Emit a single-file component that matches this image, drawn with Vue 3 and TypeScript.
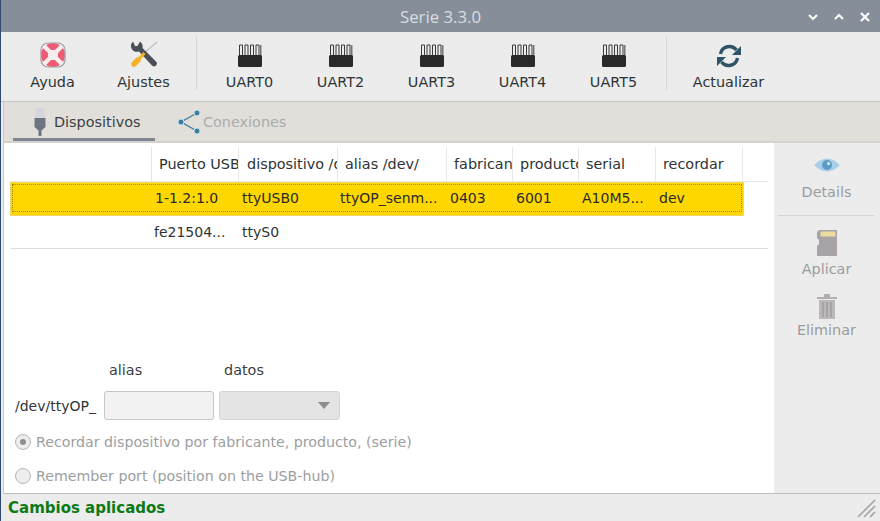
<script setup lang="ts">
const tools: string[] = ['UART0', 'UART2', 'UART3', 'UART4', 'UART5']
const cols: { label: string; w: number; pad: number }[] = [
  { label: 'Puerto USB', w: 87, pad: 7 },
  { label: 'dispositivo /dev/', w: 99, pad: 8 },
  { label: 'alias /dev/', w: 109, pad: 7 },
  { label: 'fabricante', w: 66, pad: 7 },
  { label: 'producto', w: 66, pad: 7 },
  { label: 'serial', w: 77, pad: 7 },
  { label: 'recordar', w: 87, pad: 7 },
]
const selWidths: number[] = [87, 98, 110, 66, 66, 77, 70]
const plainWidths: number[] = [88, 98, 110, 66, 66, 77, 70]
const row1 = ['1-1.2:1.0', 'ttyUSB0', 'ttyOP_senm...', '0403', '6001', 'A10M5...', 'dev']
const row2 = ['fe21504...', 'ttyS0', '', '', '', '', '']
</script>

<template>
  <div class="win">
    <div class="title">
      <span class="title-text">Serie 3.3.0</span>
      <div class="controls">
        <svg width="12" height="12" viewBox="0 0 12 12"><path d="M2 4l4 4 4-4" fill="none" stroke="#fff" stroke-width="2"/></svg>
        <svg width="12" height="12" viewBox="0 0 12 12"><path d="M2 8l4-4 4 4" fill="none" stroke="#fff" stroke-width="2"/></svg>
        <svg width="12" height="12" viewBox="0 0 12 12"><path d="M2 2l8 8M10 2l-8 8" fill="none" stroke="#fff" stroke-width="2.2"/></svg>
      </div>
    </div>

    <div class="toolbar">
      <div class="tool">
        <svg width="26" height="26" viewBox="0 0 26 26">
          <rect x="1" y="1" width="24" height="24" rx="7" fill="#f4eeee"/>
          <circle cx="13" cy="13" r="8.500" fill="none" stroke="#ef5a75" stroke-width="7"/>
          <path d="M3 3l20 20M23 3L3 23" stroke="#f4eeee" stroke-width="4.400"/>
          <circle cx="13" cy="13" r="5" fill="#f4eeee"/>
          <rect x="1" y="1" width="24" height="24" rx="7" fill="none" stroke="#9a9a9e" stroke-width="1.2"/>
        </svg>
        <span>Ayuda</span>
      </div>
      <div class="tool">
        <svg width="28" height="28" viewBox="0 0 28 28">
          <path d="M13 14L27 2" stroke="#b9c0c8" stroke-width="1.2"/>
          <path d="M3 1.500a6.500 6.500 0 0 0-1.500 7 6.500 6.500 0 0 0 7.500 3L22 25.500a2.800 2.800 0 0 0 4-4L12.500 8a6.500 6.500 0 0 0-2.500-6.500L7.500 6 5 6z" fill="#4a4f58"/>
          <path d="M14.500 13L6 22" stroke="#f5b324" stroke-width="3"/>
          <path d="M8 20L4 24" stroke="#f5b324" stroke-width="5.500" stroke-linecap="round"/>
        </svg>
        <span>Ajustes</span>
      </div>
      <div class="sep first-sep"></div>
      <div v-for="t in tools" :key="t" class="tool">
        <svg width="26" height="24" viewBox="0 0 26 24">
          <path d="M2.500 1h3v12h-3zM8 1h3v12H8zM13.500 1h3v12h-3zM19 1h3v12h-3z" fill="none" stroke="#3b3b3b" stroke-width="1"/>
          <path d="M23 1h1.500v12H23z" fill="#777"/>
          <rect x="1" y="11" width="24" height="12" rx="1.500" fill="#2a2a2a"/>
        </svg>
        <span>{{ t }}</span>
      </div>
      <div class="sep last-sep"></div>
      <div class="tool">
        <svg width="26" height="24" viewBox="0 0 26 24">
          <path d="M4.500 10a9 9 0 0 1 16-4" fill="none" stroke="#2f5468" stroke-width="3.400"/>
          <path d="M25 2v9h-9z" fill="#2f5468"/>
          <path d="M21.500 14a9 9 0 0 1-16 4" fill="none" stroke="#2f5468" stroke-width="3.400"/>
          <path d="M1 22v-9h9z" fill="#2f5468"/>
        </svg>
        <span>Actualizar</span>
      </div>
    </div>

    <div class="tabs">
      <div class="tab active">
        <svg width="14" height="28" viewBox="0 0 14 28">
          <rect x="2.500" y="0" width="9" height="10" fill="#d6d6dc"/>
          <path d="M1.500 10h11v9l-4 3.500V28h-3v-5.500l-4-3.500z" fill="#6d7582"/>
        </svg>
        <span>Dispositivos</span>
      </div>
      <div class="tab off">
        <svg width="26" height="26" viewBox="0 0 26 26">
          <path d="M21 4L5 13l16 9" fill="none" stroke="#3f7d99" stroke-width="1.400"/>
          <circle cx="21" cy="4" r="3" fill="#3f7d99" stroke="#bfe6f2"/>
          <circle cx="5" cy="13" r="3" fill="#3f7d99" stroke="#bfe6f2"/>
          <circle cx="21" cy="22" r="3" fill="#3f7d99" stroke="#bfe6f2"/>
        </svg>
        <span>Conexiones</span>
      </div>
    </div>

    <div class="main">
      <div class="pane">
        <div class="table">
          <div class="row head">
            <div class="spacer"></div>
            <div
              v-for="c in cols"
              :key="c.label"
              class="hcell"
              :style="{ width: c.w + 'px', paddingLeft: c.pad + 'px' }"
            >{{ c.label }}</div>
          </div>
          <div class="row sel">
            <div class="focus">
              <div class="spacer inner"></div>
              <div v-for="(v, i) in row1" :key="i" class="cell" :style="{ width: selWidths[i] + 'px' }">{{ v }}</div>
            </div>
          </div>
          <div class="row plain">
            <div class="spacer blank"></div>
            <div v-for="(v, i) in row2" :key="i" class="cell" :style="{ width: plainWidths[i] + 'px' }">{{ v }}</div>
          </div>
        </div>

        <div class="form">
          <div class="labels"><span class="l1">alias</span><span>datos</span></div>
          <div class="inputs">
            <span class="prefix">/dev/ttyOP_</span>
            <div class="entry"></div>
            <div class="combo"><i class="caret"></i></div>
          </div>
          <div class="radio first"><i class="dot on"></i><span>Recordar dispositivo por fabricante, producto, (serie)</span></div>
          <div class="radio"><i class="dot"></i><span>Remember port (position on the USB-hub)</span></div>
        </div>
      </div>

      <div class="side">
        <div class="act a1">
          <svg width="28" height="18" viewBox="0 0 28 18">
            <path d="M1 9q13-13 26 0q-13 13-26 0z" fill="#a9cfe8"/>
            <circle cx="14" cy="9" r="5" fill="#5f9cc4"/>
            <circle cx="15.500" cy="7.500" r="1.500" fill="#e4f0f8"/>
          </svg>
          <span>Details</span>
        </div>
        <div class="side-sep"></div>
        <div class="act a2">
          <svg width="22" height="28" viewBox="0 0 22 28">
            <path d="M3 1h18v26H1V17l2-2v-4L1 9V3z" fill="#a7a3a6"/>
            <rect x="4.500" y="2.500" width="15" height="5" fill="#ecdca0"/>
          </svg>
          <span>Aplicar</span>
        </div>
        <div class="act a3">
          <svg width="22" height="28" viewBox="0 0 22 28">
            <path d="M1 5h20v2H1zM8 2h6v3H8z" fill="#b3afb1"/>
            <path d="M3 8h16v19H3z" fill="#bcb8ba"/>
            <path d="M7 10v15M11 10v15M15 10v15" stroke="#9a9698" stroke-width="1.200"/>
          </svg>
          <span>Eliminar</span>
        </div>
      </div>
    </div>

    <div class="status">
      <span>Cambios aplicados</span>
      <svg width="22" height="20" viewBox="0 0 22 20" class="grip">
        <path d="M2 19L19 2M8 19L19 8M14 19l5-5" stroke="#a3a3a3" stroke-width="1.600"/>
      </svg>
    </div>
  </div>
</template>

<style>
html, body { margin: 0; padding: 0; }
</style>

<style scoped>
.win {
  width: 880px;
  height: 521px;
  display: flex;
  flex-direction: column;
  overflow: hidden;
  box-sizing: border-box;
  border-left: 1px solid #2f4a72;
  background: #ececec;
  font-family: "DejaVu Sans", sans-serif;
  font-size: 14.4px;
  color: #2e3436;
}
.title {
  height: 32px;
  flex: none;
  background: #868f99;
  display: flex;
  align-items: center;
  justify-content: center;
  position: relative;
  font-family: "Open Sans", sans-serif;
  font-size: 16.8px;
  color: #dadde0;
}
.controls {
  position: absolute;
  right: 9px;
  top: 11px;
  display: flex;
  gap: 14px;
}
.controls svg { display: block; }
.toolbar {
  height: 70px;
  flex: none;
  display: flex;
  align-items: stretch;
  padding-left: 6px;
  border-bottom: 1px solid #c4c4c4;
  box-sizing: border-box;
}
.tool {
  width: 91px;
  flex: none;
  display: flex;
  flex-direction: column;
  align-items: center;
  justify-content: flex-end;
  padding-bottom: 11px;
  gap: 6px;
}
.tool svg { display: block; }
.sep {
  width: 1px;
  flex: none;
  background: #d6d6d6;
  margin: 4px 0 11px;
}
.first-sep { margin-left: 7px; margin-right: 7px; }
.last-sep { margin-left: 7px; margin-right: 16px; }
.tabs {
  height: 41px;
  flex: none;
  margin-left: 2px;
  background: #e2dfdb;
  border-left: 1px solid #c8c8c8;
  border-bottom: 2px solid #d4d2cf;
  box-sizing: border-box;
  display: flex;
  padding-left: 9px;
}
.tab {
  display: flex;
  align-items: center;
}
.active {
  width: 142px;
  box-sizing: border-box;
  padding: 3px 0 0 20px;
  gap: 7px;
  color: #3a3f44;
  border-bottom: 3px solid #7e8790;
}
.off {
  color: #a9acae;
  padding-left: 21px;
  gap: 1px;
}
.main {
  flex: 1;
  min-height: 0;
  display: flex;
  margin-left: 2px;
  border-left: 1px solid #c8c8c8;
  border-bottom: 1px solid #bdbdbd;
}
.pane {
  width: 770px;
  background: #fff;
  display: flex;
  flex-direction: column;
  justify-content: space-between;
  flex: none;
}
.table {
  padding: 4px 6px 0 6px;
}
.row {
  display: flex;
  height: 33px;
  box-sizing: border-box;
  align-items: center;
}
.head { border-bottom: 1px solid #e8e8e8; height: 35px; }
.plain { border-bottom: 1px solid #dedede; }
.spacer { width: 142px; flex: none; align-self: stretch; border-right: 1px solid #e4e4e4; box-sizing: border-box; }
.spacer.inner { border: 0; width: 140px; }
.spacer.blank { border: 0; width: 143px; }
.hcell {
  box-sizing: border-box;
  flex: none;
  align-self: stretch;
  display: flex;
  align-items: center;
  border-right: 1px solid #e8e8e8;
  overflow: hidden;
  white-space: nowrap;
}
.cell {
  box-sizing: border-box;
  flex: none;
  padding-left: 2px;
  white-space: nowrap;
  overflow: hidden;
  font-size: 14px;
  color: #2a2a2a;
}
.plain .cell { color: #2e3436; padding-left: 1px; }
.sel {
  width: 734px;
  height: 34px;
  background: #ffd700;
  padding: 2px 2px 3px;
  border-bottom: 1px solid #e8e2a0;
  color: #2a2400;
  outline: 1px solid #f0d860;
  outline-offset: -1px;
}
.focus {
  flex: 1;
  display: flex;
  align-items: center;
  align-self: stretch;
  border: 1px dotted #a08a10;
}
.form { padding: 0 0 6px 11px; }
.labels {
  display: flex;
  padding-left: 94px;
  height: 21px;
  color: #3c3f42;
}
.l1 { width: 115px; }
.inputs {
  display: flex;
  align-items: center;
  margin-top: 8px;
  height: 29px;
}
.prefix { width: 89px; font-size: 14px; white-space: nowrap; }
.entry {
  width: 110px;
  height: 29px;
  box-sizing: border-box;
  background: #f2f2f2;
  border: 1px solid #c6c6c6;
  border-radius: 3px;
  margin-right: 5px;
}
.combo {
  width: 121px;
  height: 29px;
  box-sizing: border-box;
  background: #e4e4e4;
  border: 1px solid #d4d4d4;
  border-radius: 3px;
  display: flex;
  align-items: center;
  justify-content: flex-end;
  padding-right: 9px;
}
.caret {
  width: 0;
  height: 0;
  border-left: 6px solid transparent;
  border-right: 6px solid transparent;
  border-top: 7px solid #8d8d8d;
}
.radio {
  display: flex;
  align-items: center;
  gap: 5px;
  color: #9c9e9f;
  font-size: 14.2px;
  height: 22px;
  margin-top: 12px;
}
.first { margin-top: 11px; }
.dot {
  width: 16px;
  height: 16px;
  box-sizing: border-box;
  border-radius: 50%;
  border: 1px solid #b6b6b6;
  background: #ededed;
  display: flex;
  align-items: center;
  justify-content: center;
}
.dot.on::after {
  content: "";
  width: 6px;
  height: 6px;
  border-radius: 50%;
  background: #8f8f8f;
}
.side {
  flex: 1;
  display: flex;
  flex-direction: column;
  background: #ececec;
  color: #9a9c9e;
  padding-right: 1px;
}
.act {
  display: flex;
  flex-direction: column;
  align-items: center;
}
.act svg { display: block; }
.a1 { padding-top: 13px; gap: 10px; }
.side-sep {
  height: 1px;
  background: #d4d4d4;
  margin: 15px 5px 0 4px;
}
.a2 { padding-top: 13px; gap: 4px; }
.a3 { padding-top: 15px; gap: 2px; }
.status {
  height: 27px;
  flex: none;
  display: flex;
  align-items: center;
  justify-content: space-between;
  padding-left: 5px;
  font-weight: 700;
  font-size: 15px;
  color: #0c7a14;
  margin-left: 2px;
}
.grip { align-self: flex-end; margin-right: 2px; margin-bottom: 3px; }
</style>
